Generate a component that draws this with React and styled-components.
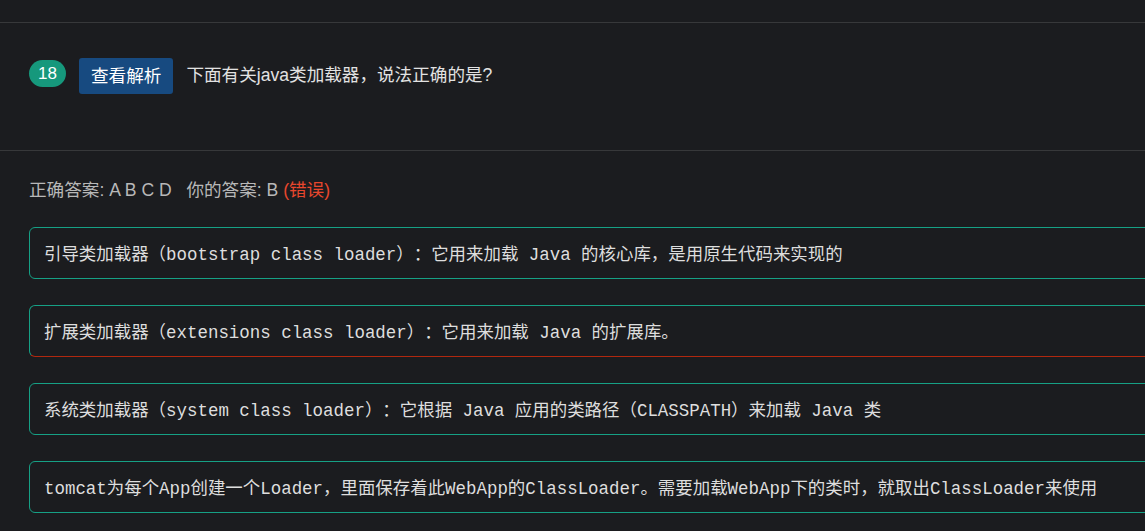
import React from 'react';
import styled, { createGlobalStyle } from 'styled-components';

const GlobalStyle = createGlobalStyle`
  html, body {
    margin: 0;
    padding: 0;
    background: #1b1c1f;
    overflow: hidden;
  }
  * {
    text-spacing-trim: space-all;
  }
`;

const Page = styled.div`
  width: 1145px;
  height: 531px;
  padding-top: 22px;
  box-sizing: border-box;
  font-family: "Liberation Sans", "Noto Sans CJK SC", sans-serif;
  overflow: hidden;
`;

const QuestionHeader = styled.div`
  display: flex;
  align-items: flex-start;
  gap: 13px;
  height: 129px;
  box-sizing: border-box;
  padding: 35px 0 0 29px;
  border-top: 1px solid #37383a;
  border-bottom: 1px solid #37383a;
`;

const NumberBadge = styled.span`
  display: flex;
  align-items: center;
  justify-content: center;
  width: 37px;
  height: 27px;
  margin-top: 2px;
  border-radius: 14px;
  background: #16987c;
  color: #ffffff;
  font-size: 17px;
  line-height: 1;
`;

const AnalysisButton = styled.button`
  height: 36px;
  padding: 0 12px;
  border: none;
  border-radius: 3px;
  background: #174a80;
  color: #ffffff;
  font-family: inherit;
  font-size: 17.6px;
  line-height: 36px;
  cursor: pointer;
`;

const QuestionText = styled.p`
  margin: 4px 0 0;
  color: #e2e2e2;
  font-size: 17.6px;
  line-height: 26px;
`;

const AnswerLine = styled.p`
  margin: 27px 0 0 29px;
  color: #b8b8b8;
  font-size: 17.6px;
  line-height: 24px;
  white-space: pre;
`;

const Wrong = styled.span`
  color: #e8472d;
`;

const OptionList = styled.div`
  display: flex;
  flex-direction: column;
  gap: 26px;
  margin: 25px 0 0 29px;
  width: 1140px;
`;

const OptionCard = styled.div`
  display: flex;
  align-items: center;
  height: 52px;
  box-sizing: border-box;
  padding: 3px 0 0 14px;
  border: 1px solid #16a085;
  border-bottom-color: ${(props) => (props.$wrong ? '#b1280f' : '#16a085')};
  border-radius: 6px;
  color: #dedede;
  font-family: "Liberation Mono", "Noto Sans CJK SC", monospace;
  font-size: 17.45px;
  line-height: 24px;
  white-space: nowrap;
`;

const options = [
  { text: '引导类加载器（bootstrap class loader）：它用来加载 Java 的核心库，是用原生代码来实现的' },
  { text: '扩展类加载器（extensions class loader）：它用来加载 Java 的扩展库。', wrong: true },
  { text: '系统类加载器（system class loader）：它根据 Java 应用的类路径（CLASSPATH）来加载 Java 类' },
  { text: 'tomcat为每个App创建一个Loader，里面保存着此WebApp的ClassLoader。需要加载WebApp下的类时，就取出ClassLoader来使用' },
];

const App = () => (
  <Page>
    <GlobalStyle />
    <QuestionHeader>
      <NumberBadge>18</NumberBadge>
      <AnalysisButton type="button">查看解析</AnalysisButton>
      <QuestionText>下面有关java类加载器，说法正确的是?</QuestionText>
    </QuestionHeader>
    <AnswerLine>
      {'正确答案: A B C D   你的答案: B '}
      <Wrong>(错误)</Wrong>
    </AnswerLine>
    <OptionList>
      {options.map((opt) => (
        <OptionCard key={opt.text} $wrong={opt.wrong}>
          {opt.text}
        </OptionCard>
      ))}
    </OptionList>
  </Page>
);

export default App;
